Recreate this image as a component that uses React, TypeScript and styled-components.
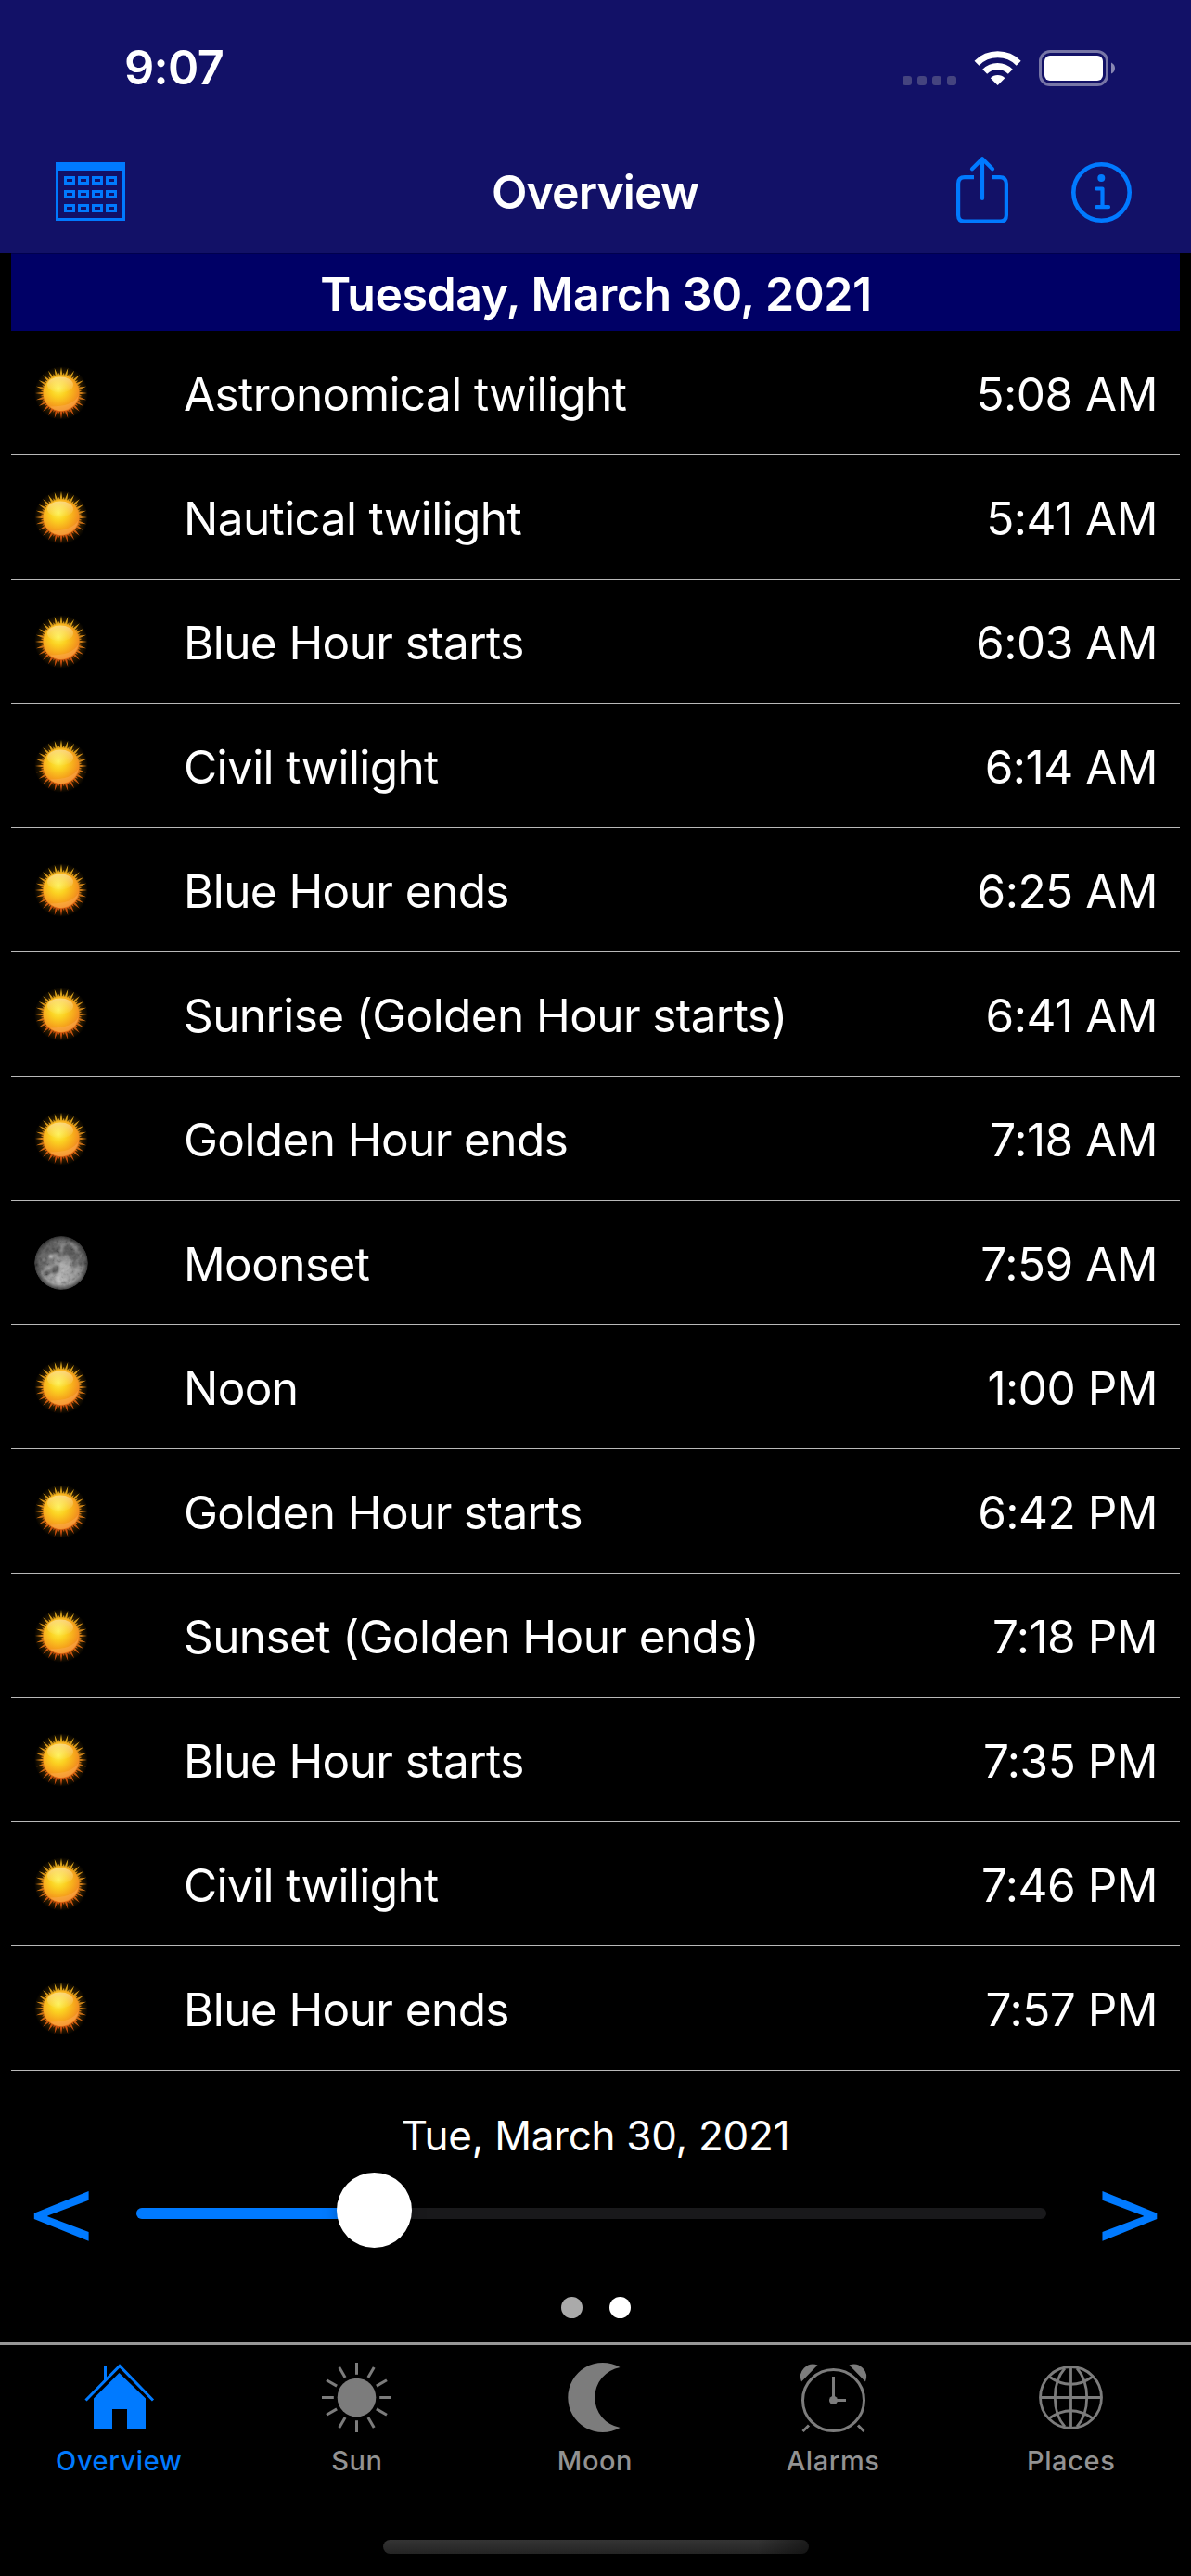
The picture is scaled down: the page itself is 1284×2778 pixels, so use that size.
import React from "react";
import styled, { createGlobalStyle } from "styled-components";

const BLUE = "#007aff";
const GRAY = "#7c7c7c";

const GlobalStyle = createGlobalStyle`
  * {
    box-sizing: border-box;
  }

  body {
    margin: 0;
    background: #000;
    color: #fff;
    font-family: Inter, "Liberation Sans", sans-serif;
  }
`;

const Screen = styled.div`
  width: 1284px;
  height: 2778px;
  display: flex;
  flex-direction: column;
  overflow: hidden;
  background: #000;
`;

const Header = styled.header`
  height: 273px;
  flex: none;
  background: #121167;
`;

const StatusBar = styled.div`
  height: 141px;
  padding: 4px 82px 0 134px;
  display: flex;
  align-items: center;
  justify-content: space-between;
`;

const Clock = styled.span`
  font-size: 50.5px;
  font-weight: 600;
  letter-spacing: -0.7px;
`;

const StatusIcons = styled.svg`
  width: 230px;
  height: 48px;
`;

const NavBar = styled.nav`
  height: 132px;
  padding: 0 64px 0 60px;
  display: grid;
  grid-template-columns: 240px 1fr 240px;
  align-items: center;
`;

const Title = styled.h1`
  margin: 0;
  padding-left: 3px;
  font-size: 50px;
  font-weight: 600;
  letter-spacing: -0.9px;
  text-align: center;
`;

const NavButtons = styled.div`
  display: flex;
  justify-content: flex-end;
  align-items: center;
  gap: 68px;
`;

const Icon = styled.svg<{ $up?: number; $down?: number }>`
  display: block;
  overflow: visible;
  margin-top: ${(p) => p.$down ?? 0}px;
  margin-bottom: ${(p) => p.$up ?? 0}px;
`;

const List = styled.section`
  margin: 0 12px;
`;

const DateHeader = styled.h2`
  margin: 0;
  height: 84px;
  padding: 3px 0 0 1px;
  display: flex;
  align-items: center;
  justify-content: center;
  border-top: 1px solid #00004e;
  background: #000066;
  font-size: 50px;
  font-weight: 600;
  letter-spacing: -0.43px;
`;

const Row = styled.div`
  height: 134px;
  padding: 0 24px 0 25px;
  display: grid;
  grid-template-columns: 161px 1fr auto;
  align-items: center;
  border-bottom: 1px solid #b9b9b9;
  font-size: 49.5px;
`;

const EventName = styled.span`
  padding-top: 2px;
  letter-spacing: -0.6px;
`;

const EventTime = styled.span`
  padding-top: 3px;
  letter-spacing: -0.5px;
`;

const DayPicker = styled.section`
  height: 293px;
  padding-top: 42px;
  display: flex;
  flex-direction: column;
  align-items: center;
`;

const DayLabel = styled.div`
  height: 56px;
  line-height: 56px;
  font-size: 44px;
  letter-spacing: -0.28px;
`;

const SliderRow = styled.div`
  width: 100%;
  height: 112px;
  padding: 0 26px;
  display: grid;
  grid-template-columns: 121px 981px 1fr;
  align-items: center;
`;

const StepButton = styled.button<{ $end?: boolean }>`
  height: 112px;
  padding: 0 0 11px;
  border: 0;
  background: none;
  color: ${BLUE};
  font: 400 102px/100px Inter, sans-serif;
  text-align: ${(p) => (p.$end ? "right" : "left")};
  transform: scaleX(1.25);
  transform-origin: ${(p) => (p.$end ? "right" : "left")};
`;

const Track = styled.div`
  position: relative;
  height: 12px;
  border-radius: 6px;
  background: #19191b;
`;

const Fill = styled.div`
  height: 12px;
  border-radius: 6px;
  background: ${BLUE};
`;

const Thumb = styled.div`
  position: absolute;
  z-index: 1;
  top: -38px;
  width: 81px;
  height: 81px;
  margin-left: -41px;
  border-radius: 50%;
  background: #fff;
  box-shadow: 0 4px 16px rgba(0, 0, 0, 0.25);
`;

const Dots = styled.div`
  margin-top: 34px;
  display: flex;
  gap: 29px;
`;

const Dot = styled.span<{ $active?: boolean }>`
  width: 23px;
  height: 23px;
  border-radius: 50%;
  background: ${(p) => (p.$active ? "#fff" : "#aaa")};
`;

const Footer = styled.footer`
  height: 252px;
  display: flex;
  flex-direction: column;
  justify-content: space-between;
  align-items: center;
  padding-bottom: 24px;
`;

const TabBar = styled.nav`
  width: 100%;
  padding-right: 1px;
  border-top: 3px solid #979797;
  display: grid;
  grid-template-columns: repeat(5, 1fr);
`;

const Tab = styled.div<{ $active?: boolean }>`
  padding-top: 19px;
  display: flex;
  flex-direction: column;
  align-items: center;
  color: ${(p) => (p.$active ? BLUE : GRAY)};
`;

const TabLabel = styled.span<{ $active?: boolean }>`
  margin-top: 11px;
  color: ${(p) => (p.$active ? BLUE : "#929292")};
  font-size: 29px;
  line-height: 40px;
  font-weight: 500;
  letter-spacing: 0.6px;
`;

const HomeBar = styled.div`
  width: 459px;
  height: 15px;
  border-radius: 8px;
  background: linear-gradient(90deg, transparent 88%, rgba(0, 0, 0, 0.45)),
    linear-gradient(#343434, #242424);
`;

interface SkyEvent {
  name: string;
  time: string;
  body?: "moon";
}

const events: SkyEvent[] = [
  { name: "Astronomical twilight", time: "5:08 AM" },
  { name: "Nautical twilight", time: "5:41 AM" },
  { name: "Blue Hour starts", time: "6:03 AM" },
  { name: "Civil twilight", time: "6:14 AM" },
  { name: "Blue Hour ends", time: "6:25 AM" },
  { name: "Sunrise (Golden Hour starts)", time: "6:41 AM" },
  { name: "Golden Hour ends", time: "7:18 AM" },
  { name: "Moonset", time: "7:59 AM", body: "moon" },
  { name: "Noon", time: "1:00 PM" },
  { name: "Golden Hour starts", time: "6:42 PM" },
  { name: "Sunset (Golden Hour ends)", time: "7:18 PM" },
  { name: "Blue Hour starts", time: "7:35 PM" },
  { name: "Civil twilight", time: "7:46 PM" },
  { name: "Blue Hour ends", time: "7:57 PM" },
];

// Spiky corona: alternating long and short rays around the disc
const rays = Array.from({ length: 48 }, (_, i) => {
  const a = (i * Math.PI) / 24;
  const r = i % 2 ? 22.5 : 28;
  const w = 0.09;
  const p = (rad: number, ang: number) =>
    `${(rad * Math.sin(ang)).toFixed(2)} ${(-rad * Math.cos(ang)).toFixed(2)}`;
  return `M${p(18, a - w)}L${p(r, a)}L${p(18, a + w)}Z`;
}).join("");

const SharedDefs = () => (
  <Icon width="0" height="0">
    <defs>
      <linearGradient id="rays" gradientUnits="userSpaceOnUse" x1="0" y1="-28" x2="0" y2="28">
        <stop offset="0" stopColor="#dcae1c" />
        <stop offset="0.5" stopColor="#d07c16" />
        <stop offset="1" stopColor="#c8420a" />
      </linearGradient>
      <radialGradient id="sunBody" cx="0.42" cy="0.38" r="0.65">
        <stop offset="0" stopColor="#fdf04a" />
        <stop offset="0.35" stopColor="#fbd021" />
        <stop offset="0.7" stopColor="#f6a51c" />
        <stop offset="1" stopColor="#ee7f22" />
      </radialGradient>
      <radialGradient id="glow">
        <stop offset="0.6" stopColor="#a86a00" stopOpacity="0.45" />
        <stop offset="1" stopColor="#a86a00" stopOpacity="0" />
      </radialGradient>
      <linearGradient id="gloss" x1="0" y1="0" x2="0" y2="1">
        <stop offset="0" stopColor="#fff" stopOpacity="0.42" />
        <stop offset="1" stopColor="#fff" stopOpacity="0.03" />
      </linearGradient>
      <radialGradient id="moonBody" cx="0.5" cy="0.7" r="0.75">
        <stop offset="0" stopColor="#b0b0b0" />
        <stop offset="0.4" stopColor="#8a8a8a" />
        <stop offset="0.8" stopColor="#6a6a6a" />
        <stop offset="1" stopColor="#505050" />
      </radialGradient>
      <radialGradient id="limb">
        <stop offset="0.82" stopColor="#000" stopOpacity="0" />
        <stop offset="1" stopColor="#000" stopOpacity="0.55" />
      </radialGradient>
      <clipPath id="moonDisc">
        <circle r="28.7" />
      </clipPath>
      <filter id="soften" x="-20%" y="-20%" width="140%" height="140%">
        <feGaussianBlur stdDeviation="0.9" />
      </filter>
      <filter id="craters" x="0" y="0" width="100%" height="100%">
        <feTurbulence type="fractalNoise" baseFrequency="0.2" numOctaves="3" seed="4" />
        <feColorMatrix values="1.8 0 0 0 -0.4  1.8 0 0 0 -0.4  1.8 0 0 0 -0.4  0 0 0 0 0.16" />
      </filter>
    </defs>
  </Icon>
);

const SunImage = () => (
  <Icon width="58" height="58" viewBox="-29 -29 58 58">
    <circle r="29" fill="url(#glow)" />
    <path d={rays} fill="url(#rays)" />
    <circle r="19.4" fill="url(#sunBody)" />
    <ellipse cx="-1" cy="-9" rx="14" ry="8.5" fill="url(#gloss)" />
    <path d="M-12 14.500A18.800 18.800 0 0 0 18.500 3Q12 14.500-12 14.500Z" fill="#ffb35c" opacity="0.4" />
  </Icon>
);

const MoonImage = () => (
  <Icon width="58" height="58" viewBox="-29 -29 58 58">
    <g clipPath="url(#moonDisc)">
      <circle r="28.7" fill="url(#moonBody)" />
      <g filter="url(#soften)" fill="#3c3c3c">
        <ellipse cx="-10" cy="-16" rx="9" ry="6.500" opacity="0.7" />
        <ellipse cx="-19" cy="-8" rx="6" ry="9" opacity="0.55" />
        <ellipse cx="-22" cy="2" rx="5" ry="7" opacity="0.6" />
        <ellipse cx="-13" cy="-1" rx="6" ry="4" opacity="0.35" />
        <ellipse cx="7" cy="-14" rx="5.500" ry="5.500" opacity="0.8" />
        <ellipse cx="14" cy="-8" rx="6" ry="4.500" opacity="0.8" />
        <ellipse cx="22" cy="-1" rx="4" ry="5" opacity="0.7" />
        <ellipse cx="15" cy="1" rx="3" ry="4" opacity="0.6" />
        <ellipse cx="21" cy="-13" rx="2.200" ry="4" transform="rotate(-35 21 -13)" opacity="0.8" />
        <ellipse cx="0" cy="-9" rx="4.500" ry="2.500" opacity="0.6" />
        <ellipse cx="-6" cy="7" rx="4" ry="5" opacity="0.7" />
        <ellipse cx="-16" cy="11" rx="3" ry="3" opacity="0.75" />
        <ellipse cx="-11" cy="9" rx="5" ry="2.500" opacity="0.5" />
      </g>
      <g filter="url(#soften)" fill="#c0c0c0">
        <circle cx="-11" cy="-7" r="1.800" />
        <circle cx="-19" cy="-3" r="1.200" opacity="0.7" />
        <ellipse cx="4" cy="4" rx="5" ry="4" opacity="0.35" />
        <ellipse cx="-1" cy="18" rx="5" ry="4" opacity="0.6" />
      </g>
      <rect x="-29" y="-29" width="58" height="58" filter="url(#craters)" />
      <circle r="28.7" fill="url(#limb)" />
    </g>
  </Icon>
);

const StatusGlyphs = () => (
  <StatusIcons viewBox="972 48 230 48">
    {[973, 989, 1005, 1021].map((x) => (
      <rect key={x} x={x} y="81" width="10" height="10" rx="3" fill="#45447f" />
    ))}
    <g fill="none" stroke="#fff" strokeWidth="7">
      <path d="M1053 67.200A32 32 0 0 1 1098.200 67.200" />
      <path d="M1061.700 76.200A19.500 19.500 0 0 1 1089.300 76.200" />
    </g>
    <path d="M1075.600 91L1067.800 83.200A11.200 11.200 0 0 1 1083.400 83.200Z" fill="#fff" />
    <rect x="1121.500" y="54.500" width="72" height="36" rx="10.500" fill="none" stroke="#7776a6" strokeWidth="3" />
    <rect x="1126" y="59" width="63" height="27" rx="6" fill="#fff" />
    <path d="M1198 66.500Q1202 68.500 1202 72.500T1198 78.500Z" fill="#8887b2" />
  </StatusIcons>
);

const CalendarIcon = () => (
  <Icon $up={1} width="75" height="63" viewBox="0 0 75 63">
    <path d="M0 0H75V63H0ZM3 9V60H72V9Z" fill={BLUE} fillRule="evenodd" />
    <g fill="none" stroke={BLUE} strokeWidth="3">
      {[15, 30, 45].map((y) =>
        [9, 24, 39, 54].map((x) => (
          <rect key={`${x}-${y}`} x={x + 1.5} y={y + 1.5} width="9" height="6" />
        ))
      )}
    </g>
  </Icon>
);

const ShareIcon = () => (
  <Icon $up={4} width="56" height="72" viewBox="0 0 56 72" fill="none" stroke={BLUE} strokeWidth="4.200" strokeLinecap="round" strokeLinejoin="round">
    <path d="M19 22.200H9Q2.100 22.200 2.100 29V63Q2.100 69.700 9 69.700H47Q53.900 69.700 53.900 63V29Q53.900 22.200 47 22.200H38" strokeLinecap="butt" />
    <path d="M28 45V2.500M17 13.200L28 2.200L39 13.200" />
  </Icon>
);

const InfoIcon = () => (
  <Icon $down={1} width="65" height="65" viewBox="0 0 65 65" fill="none" stroke={BLUE}>
    <circle cx="32.500" cy="32.500" r="30.200" strokeWidth="4.600" />
    <circle cx="32.300" cy="17" r="4" fill={BLUE} stroke="none" />
    <path d="M27 28.500H33.500V48.200M27 48.200H40" strokeWidth="4.200" strokeLinecap="round" strokeLinejoin="round" />
  </Icon>
);

const HouseIcon = () => (
  <Icon width="75" height="75" viewBox="0 0 75 75">
    <path d="M10 72V38.500L37.500 11L66 38.500V72H46V50H30V72Z" fill="currentColor" />
    <path d="M1.500 40.500L38 3.500L74 40.500M22.500 4V19" fill="none" stroke="currentColor" strokeWidth="3" />
  </Icon>
);

const SunIcon = () => (
  <Icon width="75" height="75" viewBox="-37.500 -37.500 75 75">
    <circle r="20.800" fill="currentColor" />
    {Array.from({ length: 12 }, (_, i) => (
      <path key={i} d="M0-37.500V-24.700" stroke="currentColor" strokeWidth="3" transform={`rotate(${i * 30})`} />
    ))}
  </Icon>
);

const MoonIcon = () => (
  <Icon width="58" height="75" viewBox="0 0 58 75">
    <path d="M56.500 5A37.500 37.500 0 1 0 56.500 70A33 33 0 0 1 56.500 5Z" fill="currentColor" />
  </Icon>
);

const AlarmIcon = () => (
  <Icon width="75" height="75" viewBox="0 0 75 75" fill="none" stroke="currentColor" strokeWidth="3">
    <circle cx="37.500" cy="40.500" r="33" />
    <path d="M3 20.500A13.700 13.700 0 0 1 20.500 2.500ZM72 20.500A13.700 13.700 0 0 0 54.500 2.500Z" fill="currentColor" stroke="none" />
    <path d="M37.500 15V40.500H51M4.500 74L11 67.500M70.500 74L64 67.500" />
    <circle cx="37.500" cy="40.500" r="4.500" fill="currentColor" stroke="none" />
  </Icon>
);

const GlobeIcon = () => (
  <Icon width="75" height="75" viewBox="0 0 75 75" fill="none" stroke="currentColor" strokeWidth="2.800">
    <circle cx="37.500" cy="37.500" r="33" />
    <path d="M37.500 4.500V70.500M4.500 37.500H70.500" />
    <path d="M31 6Q20.300 18 20.300 37.500T31 69M44 6Q54.700 18 54.700 37.500T44 69" />
    <path d="M14 15Q37.500 31.500 61 15M14 60Q37.500 43.500 61 60" />
  </Icon>
);

const tabs = [
  { label: "Overview", icon: HouseIcon },
  { label: "Sun", icon: SunIcon },
  { label: "Moon", icon: MoonIcon },
  { label: "Alarms", icon: AlarmIcon },
  { label: "Places", icon: GlobeIcon },
];

const App: React.FC = () => {
  const progress = 26.2;

  return (
    <Screen>
      <GlobalStyle />
      <SharedDefs />
      <Header>
        <StatusBar>
          <Clock>9:07</Clock>
          <StatusGlyphs />
        </StatusBar>
        <NavBar>
          <CalendarIcon />
          <Title>Overview</Title>
          <NavButtons>
            <ShareIcon />
            <InfoIcon />
          </NavButtons>
        </NavBar>
      </Header>

      <List>
        <DateHeader>Tuesday, March 30, 2021</DateHeader>
        {events.map((event) => (
          <Row key={event.time + event.name}>
            {event.body === "moon" ? <MoonImage /> : <SunImage />}
            <EventName>{event.name}</EventName>
            <EventTime>{event.time}</EventTime>
          </Row>
        ))}
      </List>

      <DayPicker>
        <DayLabel>Tue, March 30, 2021</DayLabel>
        <SliderRow>
          <StepButton>&lt;</StepButton>
          <Track>
            <Fill style={{ width: `${progress}%` }} />
            <Thumb style={{ left: `${progress}%` }} />
          </Track>
          <StepButton $end>&gt;</StepButton>
        </SliderRow>
        <Dots>
          <Dot />
          <Dot $active />
        </Dots>
      </DayPicker>

      <Footer>
        <TabBar>
          {tabs.map(({ label, icon: TabIcon }, i) => (
            <Tab key={label} $active={i === 0}>
              <TabIcon />
              <TabLabel $active={i === 0}>{label}</TabLabel>
            </Tab>
          ))}
        </TabBar>
        <HomeBar />
      </Footer>
    </Screen>
  );
};

export default App;
